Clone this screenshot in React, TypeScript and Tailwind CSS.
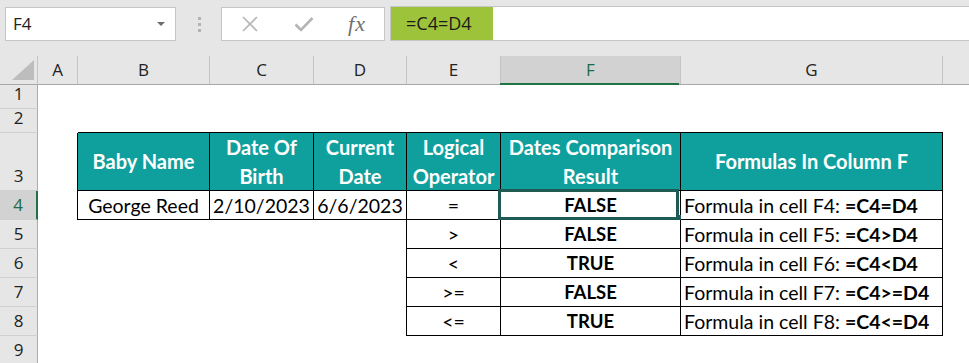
import React from 'react';

const cA = 'w-[40px] shrink-0';
const cB = 'w-[132px] shrink-0';
const cC = 'w-[104px] shrink-0';
const cD = 'w-[93px] shrink-0';
const cE = 'w-[94px] shrink-0';
const cF = 'w-[180px] shrink-0';
const cG = 'w-[262px] shrink-0';
const cH = 'flex-1';

const th = 'bg-[#0fa09e] text-white font-bold text-[20px] border-r border-b border-black flex items-center justify-center text-center leading-[29px] whitespace-nowrap';
const td = 'border-r border-b border-black flex items-center justify-center text-black text-[19.5px] leading-[29px] whitespace-nowrap';
const tb = 'border-r border-b border-black flex items-center justify-center text-black text-[18.5px] font-bold leading-[29px] whitespace-nowrap';

function Row({ h, n, active, children }: { h: string; n: number; active?: boolean; children?: React.ReactNode }) {
  return (
    <div className={`flex ${h}`}>
      <div
        className={`w-[38px] shrink-0 flex items-end justify-center pb-[4px] border-b border-b-[#d0d0d0] font-['Open_Sans',sans-serif] text-[17px] leading-[20px] ${
          active ? 'bg-[#d2d2d2] border-r-2 border-r-[#217346] text-[#1d6b47]' : 'bg-[#e6e6e6] border-r border-r-[#ababab] text-[#222222]'
        }`}
      >
        {n}
      </div>
      {children}
    </div>
  );
}

function ColHead({ w, label, active, last }: { w: string; label: string; active?: boolean; last?: boolean }) {
  return (
    <div
      className={`${w} relative flex items-center justify-center ${last ? '' : 'border-r border-r-[#c4c4c4]'} ${
        active ? 'bg-[#d2d2d2] text-[#1d6b47]' : 'text-[#222222]'
      }`}
    >
      {label}
      {active && <div className="absolute left-[-1px] right-[1px] bottom-[-1px] h-[2px] bg-[#217346]" />}
    </div>
  );
}

export default function App() {
  return (
    <div className="w-[969px] h-[363px] overflow-hidden bg-white font-['Lato',sans-serif] text-[19.5px]">
      {/* Top bar */}
      <div className="h-[56px] bg-[#e6e6e6] flex items-start pt-[6px] font-['Open_Sans',sans-serif]">
        <div className="ml-[5px] mt-[1px] w-[171px] h-[34px] bg-white border border-[#c6c6c6] flex items-center justify-between pl-[7px] pr-[10px] text-[17px] text-[#222222]">
          <span>F4</span>
          <svg width="8" height="5" viewBox="0 0 8 5">
            <polygon points="0,0 8,0 4,4" fill="#6d6d6d" />
          </svg>
        </div>
        <div className="w-[45px] h-[34px] mt-[1px] flex flex-col items-center justify-center gap-[3px] pl-[1px]">
          <div className="w-[3px] h-[3px] bg-[#b3b3b3]" />
          <div className="w-[3px] h-[3px] bg-[#b3b3b3]" />
          <div className="w-[3px] h-[3px] bg-[#b3b3b3]" />
        </div>
        <div className="mt-[1px] w-[164px] h-[34px] bg-white border border-[#c6c6c6] flex items-center">
          <div className="w-[54px] flex justify-center pl-[2px]">
            <svg width="18" height="16" viewBox="0 0 18 16">
              <path d="M2 1 L16 15 M16 1 L2 15" stroke="#b5b5b5" strokeWidth="1.6" fill="none" />
            </svg>
          </div>
          <div className="w-[54px] flex justify-center pl-[2px]">
            <svg width="20" height="16" viewBox="0 0 20 16">
              <path d="M1.5 8.5 L7 14 L18.5 2" stroke="#b5b5b5" strokeWidth="2.6" fill="none" />
            </svg>
          </div>
          <div className="flex-1 flex justify-center">
            <span className="font-['Liberation_Serif',serif] italic text-[22px] leading-[22px] text-[#707070] tracking-[1px]">fx</span>
          </div>
        </div>
        <div className="ml-[5px] flex-1 h-[35px] bg-white border-y border-l border-[#c6c6c6] flex">
          <div className="w-[102px] h-full bg-[#9dc33b] flex items-center pl-[15px] text-[18px] text-[#1b1b1b]">=C4=D4</div>
        </div>
      </div>

      {/* Column headers */}
      <div className="h-[29px] flex bg-[#e6e6e6] border-b border-b-[#a8a8a8] font-['Open_Sans',sans-serif] text-[17px]">
        <div className="w-[38px] shrink-0 relative border-r border-r-[#c4c4c4]">
          <svg className="absolute left-0 top-0" width="37" height="28" viewBox="0 0 37 28">
            <polygon points="34,4 34,24 12,24" fill="#bdbdbd" />
          </svg>
        </div>
        <ColHead w={cA} label="A" />
        <ColHead w={cB} label="B" />
        <ColHead w={cC} label="C" />
        <ColHead w={cD} label="D" />
        <ColHead w={cE} label="E" />
        <ColHead w={cF} label="F" active />
        <ColHead w={cG} label="G" />
        <ColHead w={cH} label="" last />
      </div>

      <Row h="h-[24px]" n={1} />
      <Row h="h-[24px]" n={2}>
        <div className={cA} />
        <div className={`${cB} border-b border-black`} />
        <div className={`${cC} border-b border-black`} />
        <div className={`${cD} border-b border-black`} />
        <div className={`${cE} border-b border-black`} />
        <div className={`${cF} border-b border-black`} />
        <div className={`${cG} border-b border-black`} />
      </Row>
      <Row h="h-[58px]" n={3}>
        <div className={`${cA} border-r border-black`} />
        <div className={`${cB} ${th}`}>Baby Name</div>
        <div className={`${cC} ${th}`}>Date Of<br />Birth</div>
        <div className={`${cD} ${th}`}>Current<br />Date</div>
        <div className={`${cE} ${th}`}>Logical<br />Operator</div>
        <div className={`${cF} ${th}`}>Dates Comparison<br />Result</div>
        <div className={`${cG} ${th}`}>Formulas In Column F</div>
      </Row>
      <Row h="h-[29px]" n={4} active>
        <div className={`${cA} border-r border-black`} />
        <div className={`${cB} ${td}`}>George Reed</div>
        <div className={`${cC} ${td}`}>2/10/2023</div>
        <div className={`${cD} ${td}`}>6/6/2023</div>
        <div className={`${cE} ${td}`}>=</div>
        <div className={`${cF} ${tb} relative`}>
          FALSE
          <div className="absolute left-[-3px] top-[-2px] right-[1px] bottom-[-1px] border-[3px] border-[#1e5b55]" />
          <div className="absolute right-[-1px] bottom-[-1px] w-[5px] h-[5px] bg-[#1e5b55]" />
        </div>
        <div className={`${cG} ${td} justify-start pl-[3px]`}>
          Formula in cell F4:&nbsp;<b>=C4=D4</b>
        </div>
      </Row>
      <Row h="h-[29px]" n={5}>
        <div className={cA} />
        <div className={cB} />
        <div className={cC} />
        <div className={`${cD} border-r border-black`} />
        <div className={`${cE} ${td}`}>&gt;</div>
        <div className={`${cF} ${tb}`}>FALSE</div>
        <div className={`${cG} ${td} justify-start pl-[3px]`}>
          Formula in cell F5:&nbsp;<b>=C4&gt;D4</b>
        </div>
      </Row>
      <Row h="h-[29px]" n={6}>
        <div className={cA} />
        <div className={cB} />
        <div className={cC} />
        <div className={`${cD} border-r border-black`} />
        <div className={`${cE} ${td}`}>&lt;</div>
        <div className={`${cF} ${tb}`}>TRUE</div>
        <div className={`${cG} ${td} justify-start pl-[3px]`}>
          Formula in cell F6:&nbsp;<b>=C4&lt;D4</b>
        </div>
      </Row>
      <Row h="h-[29px]" n={7}>
        <div className={cA} />
        <div className={cB} />
        <div className={cC} />
        <div className={`${cD} border-r border-black`} />
        <div className={`${cE} ${td}`}>&gt;=</div>
        <div className={`${cF} ${tb}`}>FALSE</div>
        <div className={`${cG} ${td} justify-start pl-[3px]`}>
          Formula in cell F7:&nbsp;<b>=C4&gt;=D4</b>
        </div>
      </Row>
      <Row h="h-[29px]" n={8}>
        <div className={cA} />
        <div className={cB} />
        <div className={cC} />
        <div className={`${cD} border-r border-black`} />
        <div className={`${cE} ${td}`}>&lt;=</div>
        <div className={`${cF} ${tb}`}>TRUE</div>
        <div className={`${cG} ${td} justify-start pl-[3px]`}>
          Formula in cell F8:&nbsp;<b>=C4&lt;=D4</b>
        </div>
      </Row>
      <Row h="h-[29px]" n={9} />
    </div>
  );
}
